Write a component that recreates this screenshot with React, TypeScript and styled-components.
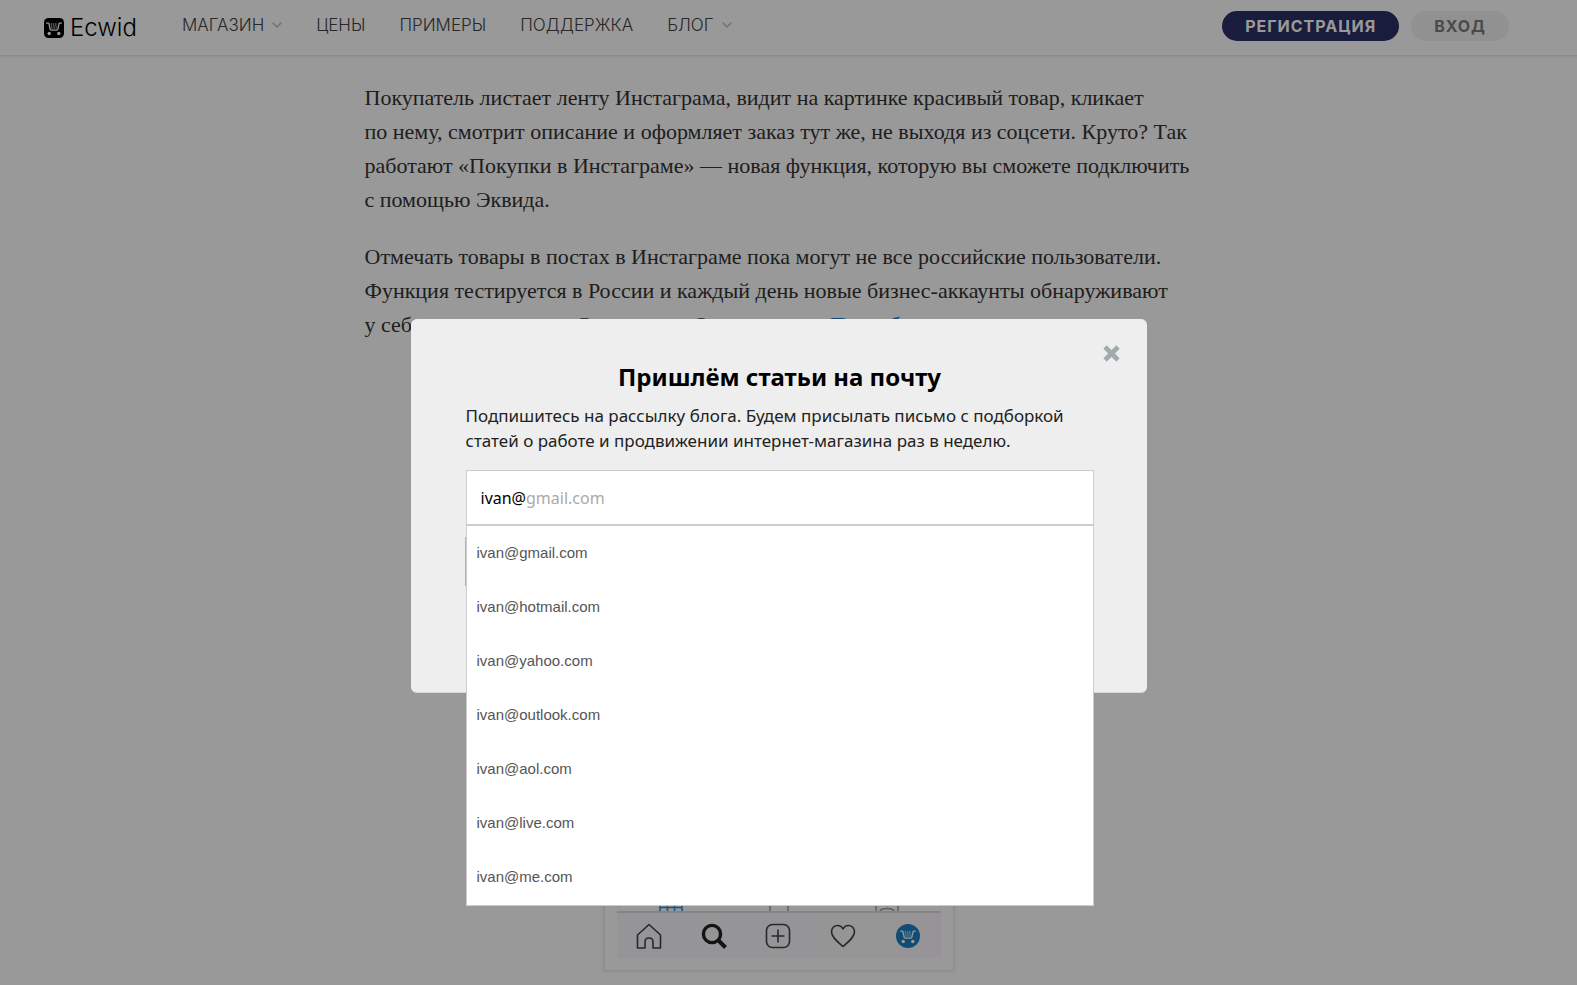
import React, { useState } from "react";
import styled, { createGlobalStyle } from "styled-components";

const GlobalStyle = createGlobalStyle`
  *, *::before, *::after { box-sizing: border-box; }
  body {
    margin: 0;
    background: #fff;
    color: #333;
    font-family: "Noto Sans", "Open Sans", sans-serif;
  }
  button, input { font: inherit; }
`;

const Header = styled.header`
  display: flex;
  align-items: center;
  height: 56px;
  padding: 0 68px 4px 44px;
  border-bottom: 1px solid #e8e8e8;
  box-shadow: 0 1px 2px rgba(0, 0, 0, 0.08);
  font-family: Inter, "Noto Sans", sans-serif;
`;

const Logo = styled.a`
  display: flex;
  align-items: center;
  gap: 6px;
  margin-right: 45px;
  padding-top: 4px;
  color: #000;
  font-size: 24px;
  font-weight: 300;
  line-height: 30px;
  text-decoration: none;
`;

const Nav = styled.nav`
  display: flex;
  gap: 34px;
  flex: 1;
  padding-bottom: 2px;
`;

const NavLink = styled.a`
  display: flex;
  align-items: center;
  gap: 8px;
  color: #444;
  font-size: 17px;
  font-weight: 300;
  line-height: 24px;
  text-decoration: none;
`;

const Actions = styled.div`
  display: flex;
  gap: 12px;
`;

const PillButton = styled.button<{ $primary?: boolean }>`
  height: 30px;
  padding: 0 23px;
  border: 0;
  border-radius: 15px;
  background: ${(p) => (p.$primary ? "#2a3064" : "#f2f2f2")};
  color: ${(p) => (p.$primary ? "#fff" : "#7d7d7d")};
  font-size: 16px;
  font-weight: 700;
  letter-spacing: 1px;
  cursor: pointer;
`;

const Article = styled.main`
  display: flex;
  flex-direction: column;
  max-width: 848px;
  margin: 0 auto;
  padding: 25px 20px 15px 0;
`;

const Paragraph = styled.p`
  margin: 0 0 23px;
  font-family: "Liberation Serif", serif;
  font-size: 22px;
  line-height: 34px;
  white-space: nowrap;
`;

const TextLink = styled.a`
  color: #1a7bc8;
  text-decoration: none;
`;

const Figure = styled.figure`
  align-self: center;
  width: 350px;
  margin: 10px 0 0;
  padding: 12px;
  border: 1px solid #ececec;
  box-shadow: 0 0 4px rgba(0, 0, 0, 0.12);
`;

const Phone = styled.div`
  display: flex;
  flex-direction: column;
  justify-content: flex-end;
  aspect-ratio: 324 / 570;
`;

const ProfileTabs = styled.div`
  display: flex;
  justify-content: space-around;
  border-bottom: 2px solid #dcdcdc;
`;

const PhoneBar = styled.div`
  display: flex;
  justify-content: space-around;
  padding: 10px 0 9px;
  background: linear-gradient(90deg, #f9f9fc 60%, #fbf7fb 100%);
`;

const Overlay = styled.div`
  position: fixed;
  inset: 0;
  display: flex;
  align-items: center;
  justify-content: center;
  padding: 26px 20px 0 0;
  background: rgba(0, 0, 0, 0.4);
`;

const Dialog = styled.section`
  position: relative;
  width: 736px;
  padding: 40px 55px 106px;
  padding-right: 53px;
  border-bottom: 1px solid #d8d8d8;
  border-radius: 6px;
  background: #eee;
`;

const CloseButton = styled.button`
  position: absolute;
  top: 23px;
  right: 24px;
  display: flex;
  padding: 3px;
  border: 0;
  background: none;
  cursor: pointer;
`;

const Title = styled.h2`
  margin: 0 0 8px;
  color: #000;
  font-size: 24px;
  font-weight: 700;
  line-height: 36px;
  text-align: center;
`;

const Lead = styled.p`
  margin: 0 0 17px;
  color: #222;
  font-size: 17px;
  line-height: 25px;
`;

const Form = styled.form`
  display: flex;
  flex-direction: column;
  gap: 12px;
`;

const Combo = styled.div`
  position: relative;
`;

const Field = styled.label`
  display: flex;
  align-items: center;
  height: 55px;
  padding: 2px 14px 0;
  border: 1px solid #ccc;
  background: #fff;
  font-size: 16px;
  cursor: text;
`;

const EmailInput = styled.input`
  field-sizing: content;
  min-width: 4px;
  padding: 0;
  border: 0;
  outline: 0;
  background: none;
  color: #000;
`;

const Hint = styled.span`
  color: #aaa;
`;

const Options = styled.ul`
  position: absolute;
  top: 100%;
  left: 0;
  right: 0;
  z-index: 1;
  margin: 0;
  padding: 0 0 1px;
  border: 1px solid #ccc;
  background: #fff;
  list-style: none;
`;

const Option = styled.button`
  display: block;
  width: 100%;
  height: 54px;
  padding: 0 10px;
  border: 0;
  background: none;
  color: #555;
  font-family: "Liberation Sans", Arial, sans-serif;
  font-size: 15px;
  text-align: left;
  cursor: pointer;
`;

const Submit = styled.button`
  height: 49px;
  margin-left: -1px;
  border: 0;
  background: #f7a644;
  color: #fff;
`;

const domains = ["gmail.com", "hotmail.com", "yahoo.com", "outlook.com", "aol.com", "live.com", "me.com"];

const Chevron = () => (
  <svg width="10" height="6" viewBox="0 0 10 6" fill="none" stroke="#c4c4c4" strokeWidth="1.6" aria-hidden="true">
    <path d="M.7.6 5 5 9.3.6" />
  </svg>
);

const Cart = () => (
  <g>
    <path d="M2.7 5.2h1.6c.4 0 .6.2.7.6l1.1 5.4c.1.6.5.9 1.1.9h5.6c.6 0 1-.3 1.1-.9l1.1-5.4c.1-.4.3-.6.7-.6h1.6" fill="none" stroke="#fff" strokeWidth="1.3" strokeLinecap="round" />
    <path d="M6.6 6h6.8M6.9 8h6.2M7.2 10h5.6" stroke="#fff" strokeWidth="1.2" strokeDasharray="1.4 .8" />
    <circle cx="5.2" cy="15.5" r="1.7" fill="#fff" />
    <circle cx="14.8" cy="15.5" r="1.7" fill="#fff" />
  </g>
);

const Stroke = ({ children, width = 1.6, label }: { children: React.ReactNode; width?: number; label: string }) => (
  <svg width="26" height="26" viewBox="0 0 26 26" fill="none" stroke="#444" strokeWidth={width} strokeLinejoin="round" role="img" aria-label={label}>
    {children}
  </svg>
);

export default function App() {
  const [email, setEmail] = useState("ivan@");

  return (
    <>
      <GlobalStyle />
      <Header>
        <Logo href="#">
          <svg width="20" height="20" viewBox="0 0 20 20" aria-hidden="true">
            <rect width="20" height="20" rx="4.5" fill="#000" />
            <Cart />
          </svg>
          Ecwid
        </Logo>
        <Nav>
          <NavLink href="#">МАГАЗИН <Chevron /></NavLink>
          <NavLink href="#">ЦЕНЫ</NavLink>
          <NavLink href="#">ПРИМЕРЫ</NavLink>
          <NavLink href="#">ПОДДЕРЖКА</NavLink>
          <NavLink href="#">БЛОГ <Chevron /></NavLink>
        </Nav>
        <Actions>
          <PillButton $primary>РЕГИСТРАЦИЯ</PillButton>
          <PillButton>ВХОД</PillButton>
        </Actions>
      </Header>

      <Article>
        <Paragraph>
          Покупатель листает ленту Инстаграма, видит на картинке красивый товар, кликает<br />
          по нему, смотрит описание и оформляет заказ тут же, не выходя из соцсети. Круто? Так<br />
          работают «Покупки в Инстаграме» — новая функция, которую вы сможете подключить<br />
          с помощью Эквида.
        </Paragraph>
        <Paragraph>
          Отмечать товары в постах в Инстаграме пока могут не все российские пользователи.<br />
          Функция тестируется в России и каждый день новые бизнес-аккаунты обнаруживают<br />
          у себя новую вкладку. Скоро всем. Ответы здесь: <TextLink href="#">Подробнее</TextLink>
        </Paragraph>
        <Figure>
          <Phone>
            <ProfileTabs>
              <svg width="24" height="24" viewBox="0 0 24 24" fill="none" stroke="#2a8fe0" strokeWidth="1.6" aria-hidden="true">
                <path d="M1 1v23M8.5 1v23M15.5 1v23M23 1v23M1 1h22M1 10h22M1 20.500h22" />
              </svg>
              <svg width="24" height="24" viewBox="0 0 24 24" fill="none" stroke="#999" strokeWidth="1.4" aria-hidden="true">
                <path d="M3 24V1h18v23" />
              </svg>
              <svg width="24" height="24" viewBox="0 0 24 24" fill="none" stroke="#999" strokeWidth="1.4" aria-hidden="true">
                <path d="M1 24V1h22v23M5 24c1-2 3-2.500 7-2.500s6 .5 7 2.500" />
                <circle cx="12" cy="14" r="4.5" />
              </svg>
            </ProfileTabs>
            <PhoneBar>
              <Stroke label="Главная">
                <path d="M1.5 12 13 1.5 24.5 12v13H17v-6c0-2.8-1.5-4-4-4s-4 1.2-4 4v6H1.5z" />
              </Stroke>
              <Stroke label="Поиск" width={3.4}>
                <circle cx="11" cy="11" r="8.6" stroke="#222" />
                <path d="m17.5 17.5 7 7" stroke="#222" strokeWidth="4" />
              </Stroke>
              <Stroke label="Добавить">
                <rect x="1.5" y="1.5" width="23" height="23" rx="6" />
                <path d="M13 6.5v13M6.5 13h13" />
              </Stroke>
              <Stroke label="Избранное">
                <path d="M13 23.5C8 19 1.5 14.5 1.5 8.8 1.5 5 4.3 2.5 7.5 2.5c2.4 0 4.4 1.2 5.5 3.5 1.1-2.3 3.1-3.5 5.5-3.5 3.2 0 6 2.5 6 6.3 0 5.7-6.5 10.2-11.5 14.7z" />
              </Stroke>
              <svg width="26" height="26" viewBox="-3 -3 26 26" role="img" aria-label="Магазин">
                <circle cx="10" cy="10" r="12" fill="#1b80c4" />
                <Cart />
              </svg>
            </PhoneBar>
          </Phone>
        </Figure>
      </Article>

      <Overlay>
        <Dialog role="dialog" aria-modal="true" aria-labelledby="subscribe-title">
          <CloseButton aria-label="Закрыть">
            <svg width="17" height="17" viewBox="0 0 17 17" stroke="#a3aaad" strokeWidth="4.6" aria-hidden="true">
              <path d="m2 2 13 13M15 2 2 15" />
            </svg>
          </CloseButton>
          <Title id="subscribe-title">Пришлём статьи на почту</Title>
          <Lead>
            Подпишитесь на рассылку блога. Будем присылать письмо с подборкой статей о работе и продвижении
            интернет-магазина раз в неделю.
          </Lead>
          <Form onSubmit={(e) => e.preventDefault()}>
            <Combo>
              <Field>
                <EmailInput
                  aria-label="Электронная почта"
                  value={email}
                  onChange={(e) => setEmail(e.target.value)}
                />
                {email.endsWith("@") && <Hint>gmail.com</Hint>}
              </Field>
              <Options>
                {domains.map((domain) => (
                  <li key={domain}>
                    <Option type="button" onClick={() => setEmail("ivan@" + domain)}>
                      ivan@{domain}
                    </Option>
                  </li>
                ))}
              </Options>
            </Combo>
            <Submit type="submit" aria-label="Подписаться" />
          </Form>
        </Dialog>
      </Overlay>
    </>
  );
}
